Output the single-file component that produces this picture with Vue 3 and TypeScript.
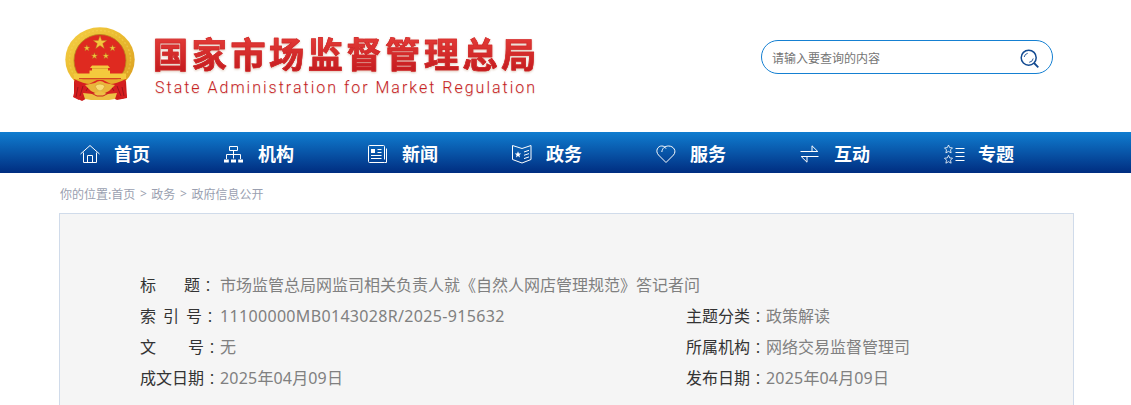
<script setup lang="ts">
import {ref, type Ref} from "vue";

interface InfoField {
  label: string[]
  colon: string
  latin?: string
  value?: string
  date?: string[]
}

const keyword: Ref<string> = ref('')
const menus: string[] = ['首页', '机构', '新闻', '政务', '服务', '互动', '专题']
const crumbs: string[] = ['首页', '政务', '政府信息公开']

const rows: InfoField[][] = [
  [{label: ['标', '题'], colon: 'gap-title', value: '市场监管总局网监司相关负责人就《自然人网店管理规范》答记者问'}],
  [
    {label: ['索', '引', '号'], colon: 'gap-index', latin: '11100000MB0143028R/2025-915632'},
    {label: ['主题分类'], colon: '', value: '政策解读'},
  ],
  [
    {label: ['文', '号'], colon: '', value: '无'},
    {label: ['所属机构'], colon: '', value: '网络交易监督管理司'},
  ],
  [
    {label: ['成文日期'], colon: '', date: ['2025', '年', '04', '月', '09', '日']},
    {label: ['发布日期'], colon: '', date: ['2025', '年', '04', '月', '09', '日']},
  ],
]
</script>

<template>
  <div class="page">
    <header class="header">
      <svg class="emblem" viewBox="0 0 70 75">
        <defs>
          <linearGradient id="gold" x1="0" y1="0" x2="1" y2="1">
            <stop offset="0" stop-color="#f5cf45" />
            <stop offset="0.5" stop-color="#e9b92f" />
            <stop offset="1" stop-color="#d99a20" />
          </linearGradient>
        </defs>
        <path d="M9 54 L61 54 L62 71 L52 73 L44 69 L26 69 L17 74 L9 70Z" fill="#cc1d1b" />
        <ellipse cx="35" cy="32.5" rx="34.7" ry="32.3" fill="url(#gold)" />
        <ellipse cx="35" cy="32.5" rx="30.5" ry="29" fill="none" stroke="#f5d553" stroke-width="1.5" stroke-dasharray="2 2" opacity="0.5" />
        <ellipse cx="35" cy="33.5" rx="26" ry="26" fill="#df2a20" stroke="#b8861d" stroke-width="0.8" />
        <g fill="#f4c63d" stroke="#b57b20" stroke-width="0.4">
          <path d="M35 8.7l1.7 4.8h5.1l-4.1 3.1 1.6 5-4.3-3-4.3 3 1.6-5-4.1-3.1h5.1z" />
          <path d="M21.8 17.9l.8 2.2h2.3l-1.8 1.4.7 2.3-2-1.4-1.9 1.4.7-2.3-1.8-1.4h2.3z" />
          <path d="M47.5 17.9l.8 2.2h2.3l-1.8 1.4.7 2.3-2-1.4-1.9 1.4.7-2.3-1.8-1.4h2.3z" />
          <path d="M29.4 25.7l.8 2.2h2.3l-1.8 1.4.7 2.3-2-1.4-1.9 1.4.7-2.3-1.8-1.4h2.3z" />
          <path d="M40.8 25.7l.8 2.2h2.3l-1.8 1.4.7 2.3-2-1.4-1.9 1.4.7-2.3-1.8-1.4h2.3z" />
        </g>
        <path d="M27 38.5 L43 38.5 L45 41 H43 V43.5 H45 V46.5 H61 V52 H9 V46.5 H24.5 V43.5 H27 V41 H25Z" fill="#f4c93d" />
        <path d="M27 41.5 H43" stroke="#c88b23" stroke-width="0.5" />
        <path d="M14 51.7 L56 51.7" stroke="#cc2a1e" stroke-width="1" />
        <path d="M9 52.2 L61 52.2 L58 57 H46 L38 53 H32 L24 57 H12Z" fill="#e6ad2b" />
        <path d="M9 52 Q19 57 25 57 L28 68 L20 66 L14 73 L8 70 L11 58Z" fill="#d51e20" />
        <path d="M61 52 Q51 57 45 57 L42 68 L50 66 L57 72 L62 70 L59 58Z" fill="#d51e20" />
        <path d="M13 60 L11 70 M18 59 L15 69 M24 59 L21 64 M57 60 L59 69 M52 59 L56 69 M46 59 L49 64" stroke="#9f151b" stroke-width="1" />
        <path d="M20 58 L30 56 Q35 52 40 56 L50 58 L44 64 L38 67 H32 L26 64Z" fill="#e9b63b" />
        <path d="M30 59 Q35 55 40 59 Q38 64 35 64 Q32 64 30 59Z" fill="#f8dc74" stroke="#d0982f" stroke-width="0.6" />
        <path d="M18 66 L28 67 L35 64 L42 67 L52 66 L50 72 L44 73 H26 L20 72Z" fill="#edc044" />
        <path d="M26 66 L32 69 H38 L44 66" fill="none" stroke="#cb2a20" stroke-width="1" />
      </svg>
      <div class="brand">
        <h1 class="brand-cn">国家市场监督管理总局</h1>
        <div class="brand-en">State Administration for Market Regulation</div>
      </div>
      <div class="search">
        <input v-model="keyword" class="search-input" type="text" placeholder="请输入要查询的内容" />
        <svg class="search-icon" viewBox="0 0 20 20" fill="none" stroke="#124a91">
          <circle cx="8.7" cy="8.7" r="7.5" stroke-width="1.5" />
          <path d="M14 14l4.3 4.3" stroke-width="1.8" />
          <path d="M4.2 8a4.6 4.6 0 0 1 3.5-3.7M13.2 9.5a4.6 4.6 0 0 1-4 3.8" stroke-width="0.9" />
        </svg>
      </div>
    </header>

    <nav class="nav">
      <a v-for="(menu, i) in menus" :key="menu" class="nav-item">
        <svg class="nav-icon" viewBox="0 0 20 20" fill="none" stroke="#fff" stroke-width="1">
          <template v-if="i === 0">
            <path d="M.5 10L10 1.5 19.5 10M3.5 8.5v10h13v-10M7.5 18.5v-7h5v7" />
          </template>
          <template v-else-if="i === 1">
            <path d="M5.5 2.5h8v4h-8zM9.5 6.5v8M2.5 15v-4.5h14V15" />
            <path d="M0 17h4.8M7 17h5M14.2 17H19" stroke-width="3" />
          </template>
          <template v-else-if="i === 2">
            <path d="M16.5 18.5h-15a1 1 0 0 1-1-1v-15a1 1 0 0 1 1-1h14a1 1 0 0 1 1 1v13M16.5 18.5h2v-14M9.5 5.5h4M9.5 8.5h4M3 11.5h10.5M3 14.5h10.5" />
            <path d="M3 5h4v4H3z" fill="#fff" stroke="none" />
          </template>
          <template v-else-if="i === 3">
            <path d="M.5 1.5L10 4.5l9-3v14l-9 3.5-9.5-3.5zM12 8l5-1.7M12 11.3l5-1.7M12 14.6l5-1.7" />
            <path d="M6 7.2l.9 2.2 2.3.2-1.8 1.5.6 2.3-2-1.3-2 1.3.6-2.3L2.8 9.6l2.3-.2z" fill="#fff" stroke="none" />
          </template>
          <template v-else-if="i === 4">
            <path d="M10 18.5L2.5 11C-1.2 6.8 2 1.8 5.8 2c2 0 3.3 1 4.2 2.6M5.8 8c.5-4 3.3-6 6.8-6 5 0 8.3 5 4.9 9L10 18.5" />
          </template>
          <template v-else-if="i === 5">
            <path d="M.5 7.5h17.3L12 1.8v5.7M18.5 12.5H1.2L7 18.2v-5.7" />
          </template>
          <template v-else>
            <path d="M4.5 1l1.2 2.6 2.8.3-2 2 .6 3-2.6-1.5-2.6 1.5.6-3-2-2 2.8-.3zM4.5 11.3l1.2 2.6 2.8.3-2 2 .6 3-2.6-1.5-2.6 1.5.6-3-2-2 2.8-.3z" stroke-width="0.8" />
            <path d="M11.5 4.5h9M11.5 8.5h9M11.5 12.5h9M11.5 16.5h9" />
          </template>
        </svg>
        <span>{{ menu }}</span>
      </a>
    </nav>

    <div class="crumbs">
      <span>你的位置:</span>
      <template v-for="(crumb, i) in crumbs" :key="crumb">
        <span v-if="i > 0" class="crumb-sep">&gt;</span>
        <a>{{ crumb }}</a>
      </template>
    </div>

    <section class="info">
      <div v-for="(row, r) in rows" :key="r" class="info-row">
        <div v-for="(field, f) in row" :key="f" class="field">
          <div class="label">
            <span class="label-text" :class="field.colon">
              <span v-for="part in field.label" :key="part">{{ part }}</span>
            </span>
            <span class="colon">：</span>
          </div>
          <div class="value">
            <span v-if="field.latin" class="latin code">{{ field.latin }}</span>
            <template v-if="field.date">
              <span v-for="(part, p) in field.date" :key="p" :class="{latin: p % 2 === 0}">{{ part }}</span>
            </template>
            <template v-if="field.value">{{ field.value }}</template>
          </div>
        </div>
      </div>
    </section>
  </div>
</template>

<style>
  body {
    background: #fff;
    overflow: hidden;
  }
</style>

<style scoped>
  .page {
    height: 405px;
    overflow: hidden;
    font-family: "Noto Sans CJK SC", sans-serif;
  }

  .header {
    display: flex;
    height: 132px;
    box-sizing: border-box;
    padding: 27px 78px 0 65px;
  }

  .emblem {
    width: 70px;
    height: 75px;
    flex-shrink: 0;
  }

  .brand {
    margin-left: 18px;
    padding-top: 1px;
    white-space: nowrap;
  }

  .brand-cn {
    margin: 0;
    font-size: 35px;
    line-height: 50px;
    font-weight: 700;
    letter-spacing: 3.7px;
    color: transparent;
    background: linear-gradient(#e23a36 20%, #c51c1f 85%);
    background-clip: text;
    -webkit-text-stroke: 0.6px #d02829;
    filter: drop-shadow(0 1px 1px rgba(170, 110, 70, .4));
  }

  .brand-en {
    padding-left: 2px;
    font-family: Roboto, "Liberation Sans", sans-serif;
    font-size: 16px;
    font-weight: 300;
    line-height: 19px;
    letter-spacing: 2px;
    color: #c8201f;
    text-shadow: 0 1px 1px rgba(170, 110, 70, .3);
  }

  .search {
    display: flex;
    align-items: center;
    width: 292px;
    height: 34px;
    box-sizing: border-box;
    margin: 13px 0 0 auto;
    padding: 0 12px 0 10px;
    border: 1px solid #1580d2;
    border-radius: 17px;
  }

  .search-input {
    flex: 1;
    min-width: 0;
    padding: 1px 0 0;
    border: 0;
    outline: 0;
    background: none;
    font-family: inherit;
    font-size: 12px;
  }

  .search-input::placeholder {
    color: #757575;
  }

  .search-icon {
    width: 20px;
    height: 20px;
    margin-top: 4px;
  }

  .nav {
    display: flex;
    height: 41px;
    padding-left: 80px;
    background: linear-gradient(#107dd0, #002d80);
  }

  .nav-item {
    display: flex;
    align-items: center;
    gap: 14px;
    width: 144px;
    padding-top: 1px;
    box-sizing: border-box;
    color: #fff;
    font-size: 18px;
    font-weight: 700;
    cursor: pointer;
  }

  .nav-icon {
    width: 20px;
    height: 20px;
    margin-top: 1px;
    overflow: visible;
  }

  .crumbs {
    display: flex;
    height: 40px;
    padding-left: 60px;
    font-size: 12px;
    line-height: 42px;
    color: #9a9fb0;
  }

  .crumb-sep {
    width: 16px;
    text-align: center;
    font-family: "Noto Sans", sans-serif;
  }

  .info {
    width: 1015px;
    height: 240px;
    box-sizing: border-box;
    margin-left: 59px;
    padding: 55px 0 0 80px;
    border: 1px solid #d0dbea;
    background: #f5f5f5;
  }

  .info-row {
    display: flex;
    height: 31px;
    font-size: 16px;
    line-height: 31px;
    white-space: nowrap;
  }

  .field {
    display: flex;
    width: 546px;
    flex-shrink: 0;
  }

  .field + .field {
    width: 300px;
  }

  .label {
    display: flex;
    flex-shrink: 0;
    width: 80px;
    color: #333;
  }

  .label-text {
    display: flex;
    justify-content: space-between;
    width: 64px;
  }

  .gap-title {
    width: 60px;
  }

  .gap-index {
    width: 62px;
  }

  .colon {
    padding-top: 1px;
    font-family: "Noto Sans CJK TC", sans-serif;
    font-weight: 300;
  }

  .value {
    display: flex;
    color: #808080;
  }

  .latin {
    padding-top: 1px;
    font-family: "Noto Sans", sans-serif;
    font-size: 16px;
    letter-spacing: 0.2px;
  }

  .code {
    letter-spacing: 0.33px;
  }
</style>
